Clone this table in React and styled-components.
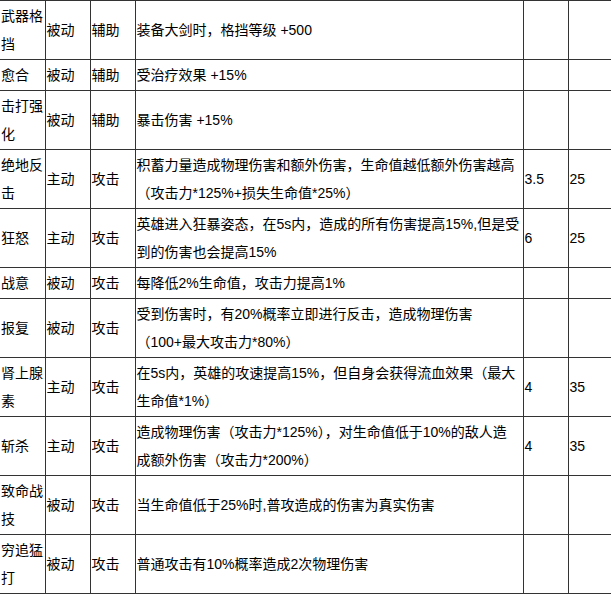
import React from "react";
import styled, { createGlobalStyle } from "styled-components";

const GlobalStyle = createGlobalStyle`
  body {
    margin: 0;
    background: #fff;
    font-family: "Liberation Sans", "Noto Sans CJK SC", sans-serif;
  }
`;

const Table = styled.table`
  border-collapse: collapse;
  table-layout: fixed;
  width: 613px;
  font-size: 14px;
  color: #000;
`;

const Cell = styled.td`
  border: 1px solid #333;
  padding: 1px 1px;
  line-height: 28px;
  vertical-align: middle;
  word-break: break-all;

  &:first-child {
    border-left: none;
  }
`;

const widths = [45, 45, 45, 388, 45, 45];

const skills = [
  ["武器格挡", "被动", "辅助", ["装备大剑时，格挡等级 +500"], "", ""],
  ["愈合", "被动", "辅助", ["受治疗效果 +15%"], "", ""],
  ["击打强化", "被动", "辅助", ["暴击伤害 +15%"], "", ""],
  [
    "绝地反击",
    "主动",
    "攻击",
    ["积蓄力量造成物理伤害和额外伤害，生命值越低额外伤害越高", "（攻击力*125%+损失生命值*25%）"],
    "3.5",
    "25",
  ],
  [
    "狂怒",
    "主动",
    "攻击",
    ["英雄进入狂暴姿态，在5s内，造成的所有伤害提高15%,但是受", "到的伤害也会提高15%"],
    "6",
    "25",
  ],
  ["战意", "被动", "攻击", ["每降低2%生命值，攻击力提高1%"], "", ""],
  [
    "报复",
    "被动",
    "攻击",
    ["受到伤害时，有20%概率立即进行反击，造成物理伤害", "（100+最大攻击力*80%）"],
    "",
    "",
  ],
  [
    "肾上腺素",
    "主动",
    "攻击",
    ["在5s内，英雄的攻速提高15%，但自身会获得流血效果（最大", "生命值*1%）"],
    "4",
    "35",
  ],
  [
    "斩杀",
    "主动",
    "攻击",
    ["造成物理伤害（攻击力*125%），对生命值低于10%的敌人造", "成额外伤害（攻击力*200%）"],
    "4",
    "35",
  ],
  ["致命战技", "被动", "攻击", ["当生命值低于25%时,普攻造成的伤害为真实伤害"], "", ""],
  ["穷追猛打", "被动", "攻击", ["普通攻击有10%概率造成2次物理伤害"], "", ""],
];

function App() {
  return (
    <>
      <GlobalStyle />
      <Table>
        <colgroup>
          {widths.map((w, i) => (
            <col key={i} style={{ width: w }} />
          ))}
        </colgroup>
        <tbody>
          {skills.map(([name, kind, role, desc, cd, cost]) => (
            <tr key={name}>
              <Cell>{name}</Cell>
              <Cell>{kind}</Cell>
              <Cell>{role}</Cell>
              <Cell>
                {desc.map((line, i) => (
                  <React.Fragment key={i}>
                    {i > 0 && <br />}
                    {line}
                  </React.Fragment>
                ))}
              </Cell>
              <Cell>{cd}</Cell>
              <Cell>{cost}</Cell>
            </tr>
          ))}
        </tbody>
      </Table>
    </>
  );
}

export default App;
